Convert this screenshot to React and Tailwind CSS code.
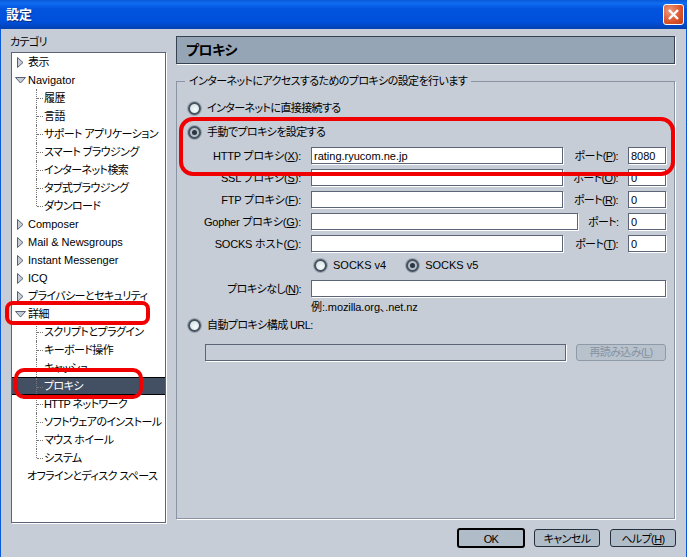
const fontStack = "font-['Liberation_Sans','Noto_Sans_CJK_JP',sans-serif]"

const tree = [
  { label: '表示', arrow: 'right' },
  { label: 'Navigator', arrow: 'down', latin: true },
  { label: '履歴', child: true },
  { label: '言語', child: true },
  { label: 'サポート アプリケーション', child: true },
  { label: 'スマート ブラウジング', child: true },
  { label: 'インターネット検索', child: true },
  { label: 'タブ式ブラウジング', child: true },
  { label: 'ダウンロード', child: true, last: true },
  { label: 'Composer', arrow: 'right', latin: true },
  { label: 'Mail & Newsgroups', arrow: 'right', latin: true },
  { label: 'Instant Messenger', arrow: 'right', latin: true },
  { label: 'ICQ', arrow: 'right', latin: true },
  { label: 'プライバシーとセキュリティ', arrow: 'right' },
  { label: '詳細', arrow: 'down' },
  { label: 'スクリプトとプラグイン', child: true },
  { label: 'キーボード操作', child: true },
  { label: 'キャッシュ', child: true },
  { label: 'プロキシ', child: true, selected: true },
  { label: 'HTTP ネットワーク', child: true },
  { label: 'ソフトウェアのインストール', child: true },
  { label: 'マウス ホイール', child: true },
  { label: 'システム', child: true, last: true },
  { label: 'オフラインとディスク スペース' },
]

const proxies = [
  { label: 'HTTP プロキシ', key: 'X', value: 'rating.ryucom.ne.jp', portKey: 'P', port: '8080' },
  { label: 'SSL プロキシ', key: 'S', portKey: 'O', port: '0' },
  { label: 'FTP プロキシ', key: 'F', portKey: 'R', port: '0' },
  { label: 'Gopher プロキシ', key: 'G', port: '0' },
  { label: 'SOCKS ホスト', key: 'C', portKey: 'T', port: '0' },
]

function Arrow({ dir }) {
  if (dir === 'down') {
    return (
      <svg width="11" height="7" viewBox="0 0 11 7" className="ml-[1px] mr-[2px] shrink-0">
        <path d="M0.5 0.5H10.5L5.5 6Z" fill="#c7cdd6" stroke="#566274" />
      </svg>
    )
  }
  return (
    <svg width="7" height="11" viewBox="0 0 7 11" className="ml-[3px] mr-[4px] shrink-0">
      <path d="M0.5 0.5V10.5L6 5.5Z" fill="#c7cdd6" stroke="#566274" />
    </svg>
  )
}

function TreeRow({ item }) {
  const text = item.selected ? 'text-white' : 'text-black'
  const rowBg = item.selected ? 'bg-[#434f63] border-y border-black' : ''
  return (
    <div className={`flex items-center h-[18px] pl-[2px] whitespace-nowrap ${rowBg} ${text}`}>
      {item.child && (
        <div className="relative w-[30px] h-full shrink-0">
          <div className={`absolute left-[22px] top-0 border-l border-dotted border-[#777] ${item.last ? 'h-[9px]' : 'h-full'}`} />
          <div className="absolute left-[23px] top-[9px] w-[6px] border-t border-dotted border-[#777]" />
        </div>
      )}
      {item.arrow && <Arrow dir={item.arrow} />}
      {!item.child && !item.arrow && <div className="w-[13px] shrink-0" />}
      <span className={item.latin ? 'tracking-[0px]' : ''}>{item.label}</span>
    </div>
  )
}

function Radio({ checked }) {
  return (
    <span className={`flex items-center justify-center w-[13px] h-[13px] rounded-full border-2 border-[#46525f] shadow-[0_0_0_1px_#9aa5b1] shrink-0 ${checked ? 'bg-[#b4bec9]' : 'bg-[radial-gradient(circle_at_60%_65%,#f6fcfc,#cfdce1)]'}`}>
      {checked && <span className="w-[5px] h-[5px] rounded-full bg-[#2a3442]" />}
    </span>
  )
}

function Field({ className = '', value = '', disabled = false }) {
  return (
    <input
      readOnly
      value={value}
      className={`h-[17px] px-[2px] border border-[#5b6577] shadow-[1px_1px_0_#fff] outline-none text-black tracking-[0px] ${disabled ? 'bg-[#c7cdd6]' : 'bg-white'} ${className}`}
    />
  )
}

function Mnemonic({ k }) {
  return <>(<u>{k}</u>):</>
}

function ProxyRow({ row }) {
  return (
    <div className="flex items-center h-[17px] gap-[10px] pr-[8px]">
      <span className="w-[114px] shrink-0 text-right whitespace-nowrap tracking-[-0.2px]">{row.label}<Mnemonic k={row.key} /></span>
      <Field value={row.value} className="flex-1 min-w-0" />
      <span className={`shrink-0 text-right whitespace-nowrap ${row.portKey ? 'w-[45px]' : 'w-[30px]'}`}>
        ポート{row.portKey ? <Mnemonic k={row.portKey} /> : ':'}
      </span>
      <Field value={row.port} className="w-[38px] shrink-0" />
    </div>
  )
}

function DialogButton({ children, primary, className = '' }) {
  return (
    <button className={`rounded-[3px] bg-[#b0bcc8] text-black ${primary ? 'w-[68px] h-[20px] border-2 border-black' : 'w-[66px] h-[18px] border border-[#26303c]'} ${className}`}>
      {children}
    </button>
  )
}

export default function App() {
  return (
    <div className={`relative w-[687px] h-[557px] overflow-hidden flex flex-col bg-[#c7cdd6] text-[11px] leading-[18px] tracking-[-0.6px] text-black [font-feature-settings:'palt'] ${fontStack}`}>
      {/* title bar */}
      <div className="h-[29px] shrink-0 flex items-center justify-between pl-[6px] pr-[3px] bg-[linear-gradient(180deg,#0a5ad8_0%,#0f6cf0_12%,#0253de_30%,#0050dc_75%,#0340b0_100%)]">
        <span className="text-white font-bold text-[13px] tracking-[0px] [text-shadow:1px_1px_0_#0a2a80]">設定</span>
        <div className="w-[21px] h-[21px] rounded-[3px] border border-white bg-[radial-gradient(circle_at_30%_30%,#ee9a7c,#d9532a_60%,#c03a18)] flex items-center justify-center">
          <svg width="13" height="13" viewBox="0 0 13 13">
            <path d="M2 2L11 11M11 2L2 11" stroke="#fff" strokeWidth="2.4" />
          </svg>
        </div>
      </div>

      <div className="flex-1 flex border-x border-x-[#0a5ad8] min-h-0">
        {/* category tree */}
        <div className="w-[165px] shrink-0 pl-[10px] pt-[4px] flex flex-col">
          <div className="h-[19px] leading-[18px] -ml-[1px]">カテゴリ</div>
          <div className="w-[155px] h-[471px] bg-white border border-[#5b6577] shadow-[1px_1px_0_#fff] overflow-hidden">
            {tree.map(item => <TreeRow key={item.label} item={item} />)}
          </div>
        </div>

        {/* settings panel */}
        <div className="flex-1 flex flex-col pl-[10px] pr-[11px] pt-[7px]">
          <div className="h-[28px] flex items-center pl-[9px] bg-[#95a5b5] border border-[#36424f] shadow-[1px_1px_0_#fff] font-bold text-[14px] tracking-[-0.5px]">
            プロキシ
          </div>

          <fieldset className="mt-[8px] h-[447px] border border-[#8a94a2] shadow-[1px_1px_0_#fff]">
            <legend className="ml-[8px] px-[4px] h-[18px]">インターネットにアクセスするためのプロキシの設定を行います</legend>

            <div className="pl-[11px] pt-[9px] flex items-center gap-[6px] h-[27px]">
              <Radio />
              <span>インターネットに直接接続する</span>
            </div>
            <div className="pl-[11px] mt-[6px] flex items-center gap-[6px] h-[18px]">
              <Radio checked />
              <span>手動でプロキシを設定する</span>
            </div>

            <div className="mt-[6px] flex flex-col gap-[5px] pl-[10px]">
              {proxies.map(row => <ProxyRow key={row.label} row={row} />)}
            </div>

            <div className="mt-[4px] pl-[137px] flex items-center h-[18px]">
              <Radio />
              <span className="ml-[6px] tracking-[0px]">SOCKS v4</span>
              <span className="ml-[20px]"><Radio checked /></span>
              <span className="ml-[6px] tracking-[0px]">SOCKS v5</span>
            </div>

            <div className="mt-[6px] flex items-center h-[17px] gap-[10px] pl-[10px] pr-[8px]">
              <span className="w-[114px] shrink-0 text-right whitespace-nowrap">プロキシなし<Mnemonic k="N" /></span>
              <Field className="flex-1 min-w-0" />
            </div>

            <div className="pl-[134px] h-[18px] mt-[1px] tracking-[-0.1px]">例:.mozilla.org、.net.nz</div>

            <div className="pl-[11px] flex items-center gap-[6px] h-[18px]">
              <Radio />
              <span>自動プロキシ構成 URL:</span>
            </div>

            <div className="mt-[10px] pl-[28px] pr-[8px] flex items-center gap-[10px]">
              <Field disabled className="flex-1 min-w-0" />
              <button className="w-[90px] h-[17px] rounded-[3px] border border-[#8f9aa8] bg-[#b8c2cd] text-[#8793a2] leading-none">
                再読み込み(<u>L</u>)
              </button>
            </div>
          </fieldset>

          <div className="mt-[9px] flex items-center justify-end -mr-[1px]">
            <DialogButton primary>OK</DialogButton>
            <DialogButton className="ml-[9px]">キャンセル</DialogButton>
            <DialogButton className="ml-[10px]">ヘルプ(<u>H</u>)</DialogButton>
          </div>
        </div>
      </div>

      {/* hand-drawn red highlights on top of the dialog */}
      <div className="absolute left-[179px] top-[117px] w-[496px] h-[59px] rounded-[14px] border-[4px] border-[#f00000]" />
      <div className="absolute left-[5px] top-[301px] w-[145px] h-[24px] rounded-[8px] border-[4px] border-[#f00000]" />
      <div className="absolute left-[14px] top-[368px] w-[129px] h-[31px] rounded-[10px] border-[4px] border-[#f00000]" />
    </div>
  )
}
